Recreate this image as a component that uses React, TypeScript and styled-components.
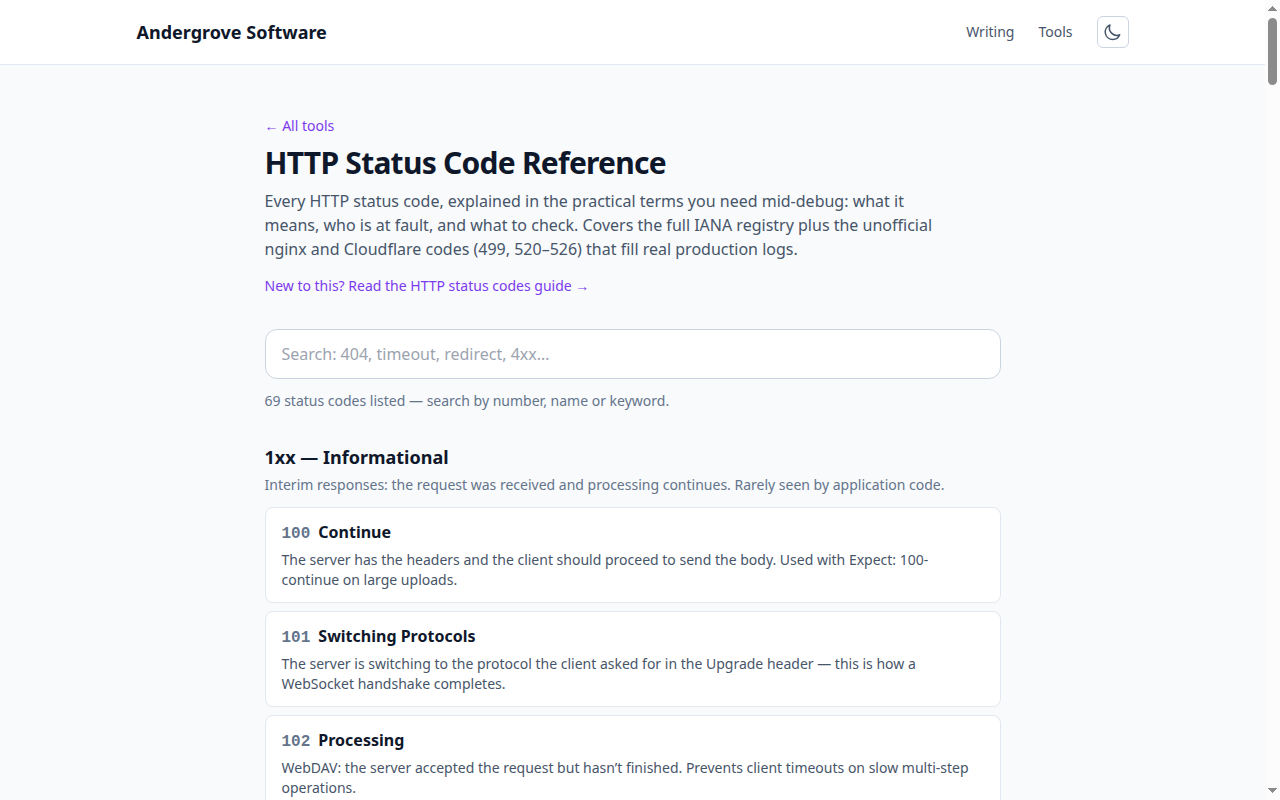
import React, { useState } from "react";
import styled, { createGlobalStyle } from "styled-components";

const GlobalStyle = createGlobalStyle`
  *, *::before, *::after { box-sizing: border-box; }
  body {
    margin: 0;
    background: #f8fafc;
    color: #0f172a;
    font-family: "Noto Sans", sans-serif;
    font-size: 16px;
    line-height: 24px;
  }
  h1, h2, h3, p, ul { margin: 0; padding: 0; }
`;

const Page = styled.div`
  display: flex;
  height: 100vh;
`;

const Viewport = styled.div`
  flex: 1;
  min-width: 0;
  overflow-y: auto;
  scrollbar-width: none;
`;

const ScrollRail = styled.div`
  display: flex;
  flex-direction: column;
  align-items: center;
  gap: 7px;
  width: 15px;
  padding: 6px 3px 7px;
  background: #fcfcfc;
`;

const ScrollThumb = styled.div`
  width: 9px;
  height: 67px;
  margin-bottom: auto;
  border-radius: 5px;
  background: #8b8b8b;
`;

const Header = styled.header`
  background: #ffffff;
  border-bottom: 1px solid #e2e8f0;
`;

const HeaderInner = styled.div`
  display: flex;
  align-items: center;
  justify-content: space-between;
  max-width: 1024px;
  margin: 0 auto;
  padding: 16px;
`;

const Brand = styled.a`
  color: #0f172a;
  font-size: 18px;
  line-height: 28px;
  font-weight: 700;
  text-decoration: none;
`;

const Nav = styled.nav`
  display: flex;
  align-items: center;
  gap: 24px;
`;

const NavLink = styled.a`
  color: #475569;
  font-size: 14px;
  line-height: 20px;
  text-decoration: none;
`;

const ThemeButton = styled.button`
  display: flex;
  align-items: center;
  justify-content: center;
  width: 32px;
  height: 32px;
  padding: 0;
  border: 1px solid #cbd5e1;
  border-radius: 6px;
  background: transparent;
  color: #475569;
  cursor: pointer;
`;

const Main = styled.main`
  max-width: 768px;
  margin: 0 auto;
  padding: 48px 16px;
`;

const TextLink = styled.a`
  color: #7c3aed;
  font-size: 14px;
  line-height: 20px;
  text-decoration: none;
  &:hover { text-decoration: underline; }
`;

const Title = styled.h1`
  margin-top: 8px;
  font-size: 30px;
  line-height: 36px;
  font-weight: 700;
  letter-spacing: -0.025em;
`;

const Intro = styled.p`
  max-width: 672px;
  margin-top: 8px;
  color: #475569;
`;

const GuideLine = styled.p`
  margin-top: 12px;
`;

const SearchInput = styled.input`
  display: block;
  width: 100%;
  margin-top: 32px;
  padding: 12px 16px;
  border: 1px solid #cbd5e1;
  border-radius: 12px;
  background: #ffffff;
  color: #0f172a;
  font: inherit;
  &::placeholder { color: #9ca3af; }
`;

const Note = styled.p<{ $gap: number }>`
  margin-top: ${(p) => p.$gap}px;
  color: #64748b;
  font-size: 14px;
  line-height: 20px;
`;

const Section = styled.section`
  margin-top: 32px;
`;

const SectionTitle = styled.h2`
  font-size: 18px;
  line-height: 28px;
  font-weight: 700;
`;

const CodeList = styled.ul`
  display: flex;
  flex-direction: column;
  gap: 8px;
  margin-top: 12px;
  list-style: none;
`;

const CodeCard = styled.li`
  padding: 12px 16px;
  border: 1px solid #e2e8f0;
  border-radius: 8px;
  background: #ffffff;
`;

const CodeHeading = styled.div`
  display: flex;
  align-items: baseline;
  gap: 8px;
`;

const CodeNumber = styled.span`
  color: #64748b;
  font-family: "Liberation Mono", monospace;
  font-weight: 700;
`;

const CodeName = styled.h3`
  font-size: 16px;
  font-weight: 700;
`;

const CodeText = styled.p`
  margin-top: 4px;
  color: #475569;
  font-size: 14px;
  line-height: 20px;
`;

const codes = [
  {
    code: "100",
    name: "Continue",
    text: "The server has the headers and the client should proceed to send the body. Used with Expect: 100-continue on large uploads.",
  },
  {
    code: "101",
    name: "Switching Protocols",
    text: "The server is switching to the protocol the client asked for in the Upgrade header — this is how a WebSocket handshake completes.",
  },
  {
    code: "102",
    name: "Processing",
    text: "WebDAV: the server accepted the request but hasn’t finished. Prevents client timeouts on slow multi-step operations.",
  },
];

function MoonIcon() {
  return (
    <svg width="20" height="20" viewBox="0 0 24 24" fill="none" stroke="currentColor" strokeWidth="1.8" strokeLinecap="round" strokeLinejoin="round" aria-hidden="true">
      <path d="M20.054 15.354A9 9 0 0 1 8.346 3.646 9.003 9.003 0 0 0 11.700 21a9.003 9.003 0 0 0 8.354-5.646z" />
    </svg>
  );
}

function ScrollArrow({ down = false }: { down?: boolean }) {
  return (
    <svg width="9" height="5" viewBox="0 0 9 5" fill="#8b8b8b" shapeRendering="crispEdges">
      <path d={down ? "M0 0h9L4.500 5z" : "M0 5h9L4.500 0z"} />
    </svg>
  );
}

export default function App() {
  const [query, setQuery] = useState("");
  const term = query.trim().toLowerCase();
  const shown = codes.filter((c) => `${c.code} ${c.name} ${c.text}`.toLowerCase().includes(term));

  return (
    <Page>
      <GlobalStyle />
      <Viewport>
        <Header>
          <HeaderInner>
            <Brand href="#">Andergrove Software</Brand>
            <Nav>
              <NavLink href="#writing">Writing</NavLink>
              <NavLink href="#tools">Tools</NavLink>
              <ThemeButton type="button" aria-label="Toggle dark mode">
                <MoonIcon />
              </ThemeButton>
            </Nav>
          </HeaderInner>
        </Header>
        <Main>
          <TextLink href="#tools">← All tools</TextLink>
          <Title>HTTP Status Code Reference</Title>
          <Intro>
            Every HTTP status code, explained in the practical terms you need mid-debug: what it means, who is at
            fault, and what to check. Covers the full IANA registry plus the unofficial nginx and Cloudflare codes
            (499, 520–526) that fill real production logs.
          </Intro>
          <GuideLine>
            <TextLink href="#guide">New to this? Read the HTTP status codes guide →</TextLink>
          </GuideLine>
          <SearchInput
            type="search"
            aria-label="Search status codes"
            placeholder="Search: 404, timeout, redirect, 4xx…"
            value={query}
            onChange={(e) => setQuery(e.target.value)}
          />
          <Note $gap={12}>69 status codes listed — search by number, name or keyword.</Note>
          <Section>
            <SectionTitle>1xx — Informational</SectionTitle>
            <Note $gap={4}>
              Interim responses: the request was received and processing continues. Rarely seen by application code.
            </Note>
            <CodeList>
              {shown.map((c) => (
                <CodeCard key={c.code}>
                  <CodeHeading>
                    <CodeNumber>{c.code}</CodeNumber>
                    <CodeName>{c.name}</CodeName>
                  </CodeHeading>
                  <CodeText>{c.text}</CodeText>
                </CodeCard>
              ))}
            </CodeList>
          </Section>
        </Main>
      </Viewport>
      <ScrollRail aria-hidden="true">
        <ScrollArrow />
        <ScrollThumb />
        <ScrollArrow down />
      </ScrollRail>
    </Page>
  );
}
